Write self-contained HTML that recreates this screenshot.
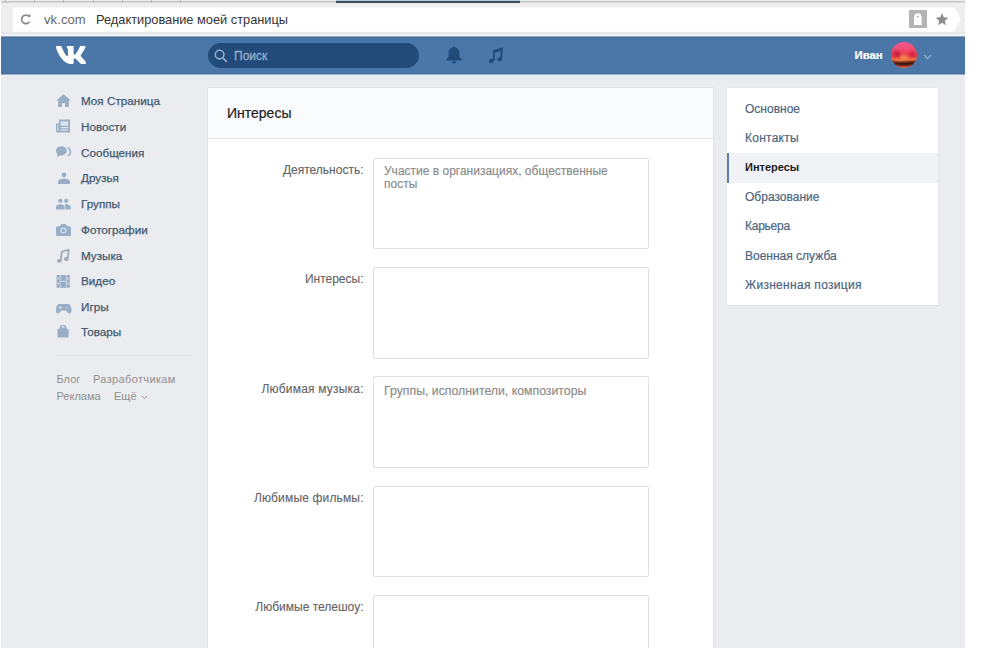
<!DOCTYPE html>
<html><head><meta charset="utf-8">
<style>
*{box-sizing:border-box;margin:0;padding:0}
html,body{width:1006px;height:650px;overflow:hidden;background:#fff;font-family:"Liberation Sans",sans-serif}
.a{position:absolute}
.t{position:absolute;white-space:nowrap;line-height:1}
svg{position:absolute;overflow:visible}
#chrome{left:1px;top:0;width:964px;height:36px;background:#eeeeee}
#tabline{left:1px;top:1px;width:964px;height:2px;background:linear-gradient(#c6c6c6 0 50%,#dadada 50%)}
#tabact{left:336px;top:1px;width:184px;height:2px;background:#3c4b59}
#tabhl{left:336px;top:0;width:184px;height:1px;background:#b9c9dc}
#addr{left:13px;top:7px;width:942px;height:25px;background:#fff}
#hdr{left:1px;top:36px;width:964px;height:38px;background:#4a76a8}
#page{left:1px;top:74px;width:964px;height:574px;background:#ebecef}
#main{left:208px;top:88px;width:505px;height:560px;background:#fff;box-shadow:0 0 0 1px #e3e4e8}
#mainhd{left:208px;top:88px;width:505px;height:51px;background:#fafbfc;border-bottom:1px solid #e7e8ec}
#right{left:727px;top:88px;width:211px;height:217px;background:#fff;box-shadow:0 1px 0 0 #dfe0e3,0 0 0 1px #e6e7eb}
.menu{font-size:11.7px;color:#42586e;left:81px;-webkit-text-stroke:0.25px #42586e}
.lbl{font-size:12px;color:#636363;text-align:right;width:200px;left:163.5px;-webkit-text-stroke:0.1px #636363}
.ta{position:absolute;left:373px;width:276px;height:91px;border:1px solid #e0e0e0;border-radius:2px;background:#fff}
.ph{font-size:12px;color:#8a8a8a;left:384px;-webkit-text-stroke:0.15px #8a8a8a}
.rm{font-size:12px;color:#4d6680;left:745px;-webkit-text-stroke:0.2px #4d6680}
.ft{font-size:11px;color:#8f8f8f}
</style></head><body>
<div id="chrome" class="a"></div>
<div id="tabline" class="a"></div>
<div id="tabhl" class="a"></div>
<div id="tabact" class="a"></div>
<div class="a" style="left:5px;top:0;width:1px;height:3px;background:#bdbdbd"></div><div class="a" style="left:34px;top:0;width:1px;height:3px;background:#bdbdbd"></div><div class="a" style="left:63px;top:0;width:1px;height:3px;background:#bdbdbd"></div><div class="a" style="left:93px;top:0;width:1px;height:3px;background:#bdbdbd"></div><div class="a" style="left:122px;top:0;width:1px;height:3px;background:#bdbdbd"></div><div class="a" style="left:151px;top:0;width:1px;height:3px;background:#bdbdbd"></div><div class="a" style="left:180px;top:0;width:1px;height:3px;background:#bdbdbd"></div>
<svg style="left:0;top:0" width="1006" height="36"><path d="M13 7.5H954.5L960.8 19.5 954.5 31.7H13z" fill="#fff"/><rect x="1" y="32" width="964" height="2" fill="#e9e7e5"/><rect x="1" y="34" width="964" height="2" fill="#eaf3fb"/></svg>
<svg style="left:19px;top:13px" width="13" height="13" viewBox="19 13 13 13"><path d="M29.2 16.6A4.3 4.3 0 1 0 29.6 21.6" fill="none" stroke="#8a8a8a" stroke-width="1.7"/><path d="M27.4 15.2L30.6 14.2 30.2 17.8z" fill="#8a8a8a"/></svg>
<div class="t" style="left:44px;top:13px;font-size:13px;color:#666;letter-spacing:0.1px">vk.com</div>
<div class="t" style="left:96px;top:13.6px;font-size:12.8px;color:#333">Редактирование моей страницы</div>
<div class="a" style="left:909px;top:10px;width:18px;height:18px;background:#b4b4b4"></div>
<svg style="left:909px;top:10px" width="18" height="19" viewBox="0 0 18 19"><path d="M5 15V7.6A3.8 4.4 0 0 1 12.6 7.6V15z" fill="#fff"/><circle cx="8.8" cy="6.8" r="1" fill="#b4b4b4"/></svg>
<svg style="left:935px;top:12.5px" width="14" height="13" viewBox="0 0 24 23"><path d="M12 0l3.1 7.6 8.2.6-6.3 5.3 2 8L12 17.1 5 21.5l2-8L.7 8.2l8.2-.6z" fill="#8c8c8c"/></svg>

<div id="hdr" class="a"></div>
<svg style="left:56px;top:46px" width="30" height="18" viewBox="4.03 7.6 15.92 9.52" preserveAspectRatio="none"><path d="M19.376 17.123h-1.744c-.66 0-.864-.525-2.05-1.727-1.033-1-1.49-1.135-1.744-1.135-.356 0-.458.102-.458.593v1.575c0 .424-.135.678-1.253.678-1.846 0-3.896-1.118-5.335-3.202C4.624 10.857 4.03 8.570 4.03 8.096c0-.254.102-.491.593-.491h1.744c.44 0 .61.203.78.677.863 2.49 2.303 4.675 2.896 4.675.22 0 .322-.102.322-.66V9.721c-.068-1.186-.695-1.287-.695-1.710 0-.204.17-.407.44-.407h2.744c.373 0 .508.203.508.643v3.473c0 .372.17.508.271.508.22 0 .407-.136.813-.542 1.254-1.406 2.151-3.574 2.151-3.574.119-.254.322-.491.763-.491h1.744c.525 0 .644.27.525.643-.22 1.017-2.354 4.031-2.354 4.031-.186.305-.254.44 0 .78.186.254.796.779 1.203 1.253.745.847 1.320 1.558 1.473 2.050.17.49-.085.744-.576.744z" fill="#fff"/></svg>
<div class="a" style="left:208px;top:43px;width:211px;height:25px;border-radius:12.5px;background:#224b7a"></div>
<svg style="left:214px;top:49px" width="14" height="14" viewBox="0 0 14 14"><circle cx="5.6" cy="5.6" r="4.3" fill="none" stroke="#8eacce" stroke-width="1.6"/><path d="M8.7 8.7L12.3 12.3" stroke="#8eacce" stroke-width="1.7" stroke-linecap="round"/></svg>
<div class="t" style="left:234px;top:49.5px;font-size:12px;color:#93aecd;-webkit-text-stroke:0.3px #93aecd">Поиск</div>
<svg style="left:440px;top:40px" width="70" height="30" viewBox="440 40 70 30"><g fill="#224b7a"><circle cx="454" cy="47.6" r="1.1"/><path d="M454 47.2C450.3 47.2 448.6 50 448.6 53.2V56.8L446.3 59.4V60.6H461.7V59.4L459.4 56.8V53.2C459.4 50 457.7 47.2 454 47.2z"/><path d="M451.8 61.4H456.2A2.2 2.2 0 0 1 451.8 61.4z"/><path d="M493.2 50.2L502.8 47.3V50.4L493.2 53.3z"/><path d="M493.2 50.2H495.2L494.6 61H492.6z"/><path d="M500.8 48H502.8L502.2 59.2H500.2z"/><ellipse cx="491.2" cy="61" rx="2.4" ry="2" transform="rotate(-20 491.2 61)"/><ellipse cx="499.8" cy="59.3" rx="2.4" ry="2" transform="rotate(-20 499.8 59.3)"/></g></svg>

<div class="t" style="left:854.5px;top:49.6px;font-size:11.4px;color:#fff;font-weight:bold;-webkit-text-stroke:0.2px #fff">Иван</div>
<svg style="left:891px;top:42px" width="26" height="26" viewBox="0 0 26 26"><defs><linearGradient id="av" x1="0" y1="0" x2="0" y2="1"><stop offset="0" stop-color="#f25a92"/><stop offset="0.3" stop-color="#ee4a6a"/><stop offset="0.55" stop-color="#e8404a"/><stop offset="0.7" stop-color="#f27a40"/><stop offset="0.8" stop-color="#f06a3a"/><stop offset="1" stop-color="#f06040"/></linearGradient><clipPath id="avc"><circle cx="13" cy="13" r="13"/></clipPath><filter id="bl"><feGaussianBlur stdDeviation="0.8"/></filter></defs><g clip-path="url(#avc)"><rect width="26" height="26" fill="url(#av)"/><g filter="url(#bl)"><ellipse cx="6" cy="12" rx="4" ry="3" fill="#c0183e" opacity=".8"/><ellipse cx="21" cy="12.5" rx="4" ry="2.5" fill="#d01a40" opacity=".7"/><ellipse cx="13" cy="15.5" rx="4" ry="2.5" fill="#f59a50" opacity=".7"/></g><path d="M0 19.2C5 19.8 9 20.2 13 20S21 19.4 26 19V22C21 23 17 24 13 24S5 23 0 22z" fill="#2e0808" filter="url(#bl)"/></g></svg>
<svg style="left:923px;top:53.5px" width="9" height="6" viewBox="0 0 9 6"><path d="M1 1l3.5 3.5L8 1" fill="none" stroke="#8eacce" stroke-width="1.3"/></svg>
<div id="page" class="a"></div>
<div class="a" style="left:1px;top:36px;width:964px;height:1px;background:#93aac2"></div>
<div class="a" style="left:1px;top:37px;width:964px;height:1px;background:#4a6c93"></div>
<div class="a" style="left:1px;top:73px;width:964px;height:1px;background:#496a91"></div>
<div class="a" style="left:1px;top:74px;width:964px;height:1px;background:#9fb4ca"></div>
<div class="a" style="left:1px;top:75px;width:964px;height:1px;background:#e3effa"></div>
<div class="a" style="left:1px;top:76px;width:964px;height:1px;background:#e9eef1"></div>
<div id="main" class="a"></div>
<div id="mainhd" class="a"></div>
<div class="t" style="left:227px;top:106px;font-size:14px;color:#222;-webkit-text-stroke:0.2px #222">Интересы</div>

<div class="t lbl" style="top:164px">Деятельность:</div>
<div class="ta" style="top:158px"></div>
<div class="t ph" style="top:164.6px">Участие в организациях, общественные</div>
<div class="t ph" style="top:178.4px">посты</div>
<div class="t lbl" style="top:273.4px">Интересы:</div>
<div class="ta" style="top:267px;height:92px"></div>
<div class="t lbl" style="top:383.1px;letter-spacing:0.2px;left:163.7px">Любимая музыка:</div>
<div class="ta" style="top:376px;height:92px"></div>
<div class="t ph" style="top:384.8px;font-size:12.3px">Группы, исполнители, композиторы</div>
<div class="t lbl" style="top:491.6px;letter-spacing:0.16px;left:163.66px">Любимые фильмы:</div>
<div class="ta" style="top:486px"></div>
<div class="t lbl" style="top:601px">Любимые телешоу:</div>
<div class="ta" style="top:595px;height:60px"></div>

<div id="right" class="a"></div>
<div class="a" style="left:727px;top:152.5px;width:211px;height:30px;background:#f0f2f5;border-left:2px solid #5a7ea8"></div>
<div class="t rm" style="top:103px">Основное</div>
<div class="t rm" style="top:132px;letter-spacing:0.25px">Контакты</div>
<div class="t rm" style="top:162px;color:#1a1a1a;font-weight:bold;font-size:11px;-webkit-text-stroke:0">Интересы</div>
<div class="t rm" style="top:191px">Образование</div>
<div class="t rm" style="top:220px;letter-spacing:-0.25px">Карьера</div>
<div class="t rm" style="top:250px">Военная служба</div>
<div class="t rm" style="top:279px;letter-spacing:0.3px">Жизненная позиция</div>

<svg style="left:56px;top:94px" width="15" height="13" viewBox="0 0 15 13"><path d="M7.5 0.3L0.2 6.6H2.2V13H5.9V9.2H9.1V13H12.8V6.6H14.8z" fill="#97aec6"/></svg>
<svg style="left:50px;top:115px" width="26" height="22" viewBox="50 115 26 22"><path d="M59 119.6H70V132.6H57.5A1.5 1.5 0 0 1 56 131.1V123.6H59z" fill="#97aec6"/><rect x="60.6" y="121.4" width="7.6" height="4.4" fill="#dce5ee"/><rect x="60.6" y="127" width="7.6" height="1.2" fill="#dce5ee"/><rect x="60.6" y="129.4" width="7.6" height="1.2" fill="#dce5ee"/><rect x="57.4" y="124.8" width="0.9" height="6" fill="#dce5ee"/></svg>
<svg style="left:50px;top:140px" width="26" height="22" viewBox="50 140 26 22"><ellipse cx="61.4" cy="150.8" rx="5.4" ry="4.6" fill="#97aec6"/><path d="M57.6 153.4L56.8 157 60.6 155.2z" fill="#97aec6"/><path d="M67.8 147.6A4.4 4.6 0 0 1 67.8 156" fill="none" stroke="#97aec6" stroke-width="1.5"/></svg>
<svg style="left:57.5px;top:172px" width="12" height="12" viewBox="0 0 12 12"><circle cx="6" cy="3" r="2.4" fill="#97aec6"/><path d="M0 12V9.8C0 8 2.5 6.8 6 6.8S12 8 12 9.8V12z" fill="#97aec6"/></svg>
<svg style="left:56px;top:197.5px" width="15" height="11.5" viewBox="0 0 15 11.5"><circle cx="4.3" cy="2.8" r="2.1" fill="#97aec6"/><circle cx="10.2" cy="2.8" r="2.1" fill="#97aec6"/><path d="M0 11.5V9.2C0 7.6 1.8 6.3 4.3 6.3S8.6 7.6 8.6 9.2V11.5z" fill="#97aec6"/><path d="M9.4 11.5V9.2C9.4 8.2 9 7.3 8.4 6.7 9 6.4 9.6 6.3 10.2 6.3 12.7 6.3 14.8 7.6 14.8 9.2V11.5z" fill="#97aec6"/></svg>
<svg style="left:56px;top:223.5px" width="15" height="12" viewBox="0 0 15 12"><path d="M1.5 2.2H4L5.3 0H9.7L11 2.2H13.5A1.5 1.5 0 0 1 15 3.7V10.5A1.5 1.5 0 0 1 13.5 12H1.5A1.5 1.5 0 0 1 0 10.5V3.7A1.5 1.5 0 0 1 1.5 2.2z" fill="#97aec6"/><circle cx="7.5" cy="6.6" r="3" fill="#d5e0eb"/><circle cx="7.5" cy="6.6" r="1.8" fill="#97aec6"/></svg>
<svg style="left:57px;top:249px" width="12" height="14" viewBox="0 0 12 14"><path d="M3.8 11.5L4.8 2.6 11.6 0.8 10.8 9" fill="none" stroke="#9aa9b8" stroke-width="1.7"/><ellipse cx="2.3" cy="11.8" rx="2.3" ry="1.9" fill="#9aa9b8"/><ellipse cx="9.3" cy="10" rx="2.3" ry="1.9" fill="#9aa9b8"/></svg>
<svg style="left:50px;top:270px" width="26" height="22" viewBox="50 270 26 22"><rect x="56.6" y="275" width="13.2" height="12.8" fill="#97aec6"/><g fill="#dce5ee"><rect x="57.6" y="277.8" width="1.4" height="1.6"/><rect x="57.6" y="282.6" width="1.4" height="1.6"/><rect x="67.4" y="277.8" width="1.4" height="1.6"/><rect x="67.4" y="282.6" width="1.4" height="1.6"/><rect x="59.8" y="275" width="0.7" height="12.8"/><rect x="65.9" y="275" width="0.7" height="12.8"/><rect x="60.5" y="281" width="5.4" height="0.8"/></g></svg>
<svg style="left:56px;top:303.5px" width="15.5" height="9.5" viewBox="0 0 15.5 9.5"><path d="M3.5 0H12C14 0 15 1.8 15.4 4.5 15.7 7 15.3 9.5 13.6 9.5 12 9.5 11 7.2 10 6.6H5.5C4.5 7.2 3.5 9.5 1.9 9.5 0.2 9.5 -0.2 7 0.1 4.5 0.5 1.8 1.5 0 3.5 0z" fill="#97aec6"/><rect x="2.6" y="3.2" width="3.4" height="1" fill="#d5e0eb"/><rect x="3.8" y="2" width="1" height="3.4" fill="#d5e0eb"/><circle cx="11" cy="3.7" r=".75" fill="#d5e0eb"/></svg>
<svg style="left:50px;top:320px" width="26" height="22" viewBox="50 320 26 22"><path d="M60.4 325.3H65.6L67 329H59z" fill="#97aec6"/><rect x="61.5" y="326.3" width="3" height="1.4" fill="#dce5ee"/><rect x="57.5" y="329" width="11.1" height="8.5" rx="0.8" fill="#97aec6"/></svg>
<div class="t menu" style="top:95px">Моя Страница</div>
<div class="t menu" style="top:121px">Новости</div>
<div class="t menu" style="top:147px">Сообщения</div>
<div class="t menu" style="top:172px">Друзья</div>
<div class="t menu" style="top:198px">Группы</div>
<div class="t menu" style="top:224px">Фотографии</div>
<div class="t menu" style="top:250px">Музыка</div>
<div class="t menu" style="top:275px">Видео</div>
<div class="t menu" style="top:301px">Игры</div>
<div class="t menu" style="top:326px">Товары</div>
<div class="a" style="left:56px;top:355px;width:137px;height:1px;background:#dfe2e7"></div>
<div class="t ft" style="left:56.5px;top:373.8px">Блог</div>
<div class="t ft" style="left:93px;top:373.8px;letter-spacing:0.36px">Разработчикам</div>
<div class="t ft" style="left:56.5px;top:390.8px">Реклама</div>
<div class="t ft" style="left:114px;top:390.8px">Ещё</div>
<svg style="left:141px;top:395px" width="7" height="5" viewBox="0 0 7 5"><path d="M0.7 0.8L3.5 3.6 6.3 0.8" fill="none" stroke="#a0a0a0" stroke-width="1"/></svg>
<div class="a" style="left:0;top:648px;width:1006px;height:2px;background:#fff"></div>
<div class="a" style="left:0;top:0;width:1px;height:650px;background:#fff"></div>
</body></html>
